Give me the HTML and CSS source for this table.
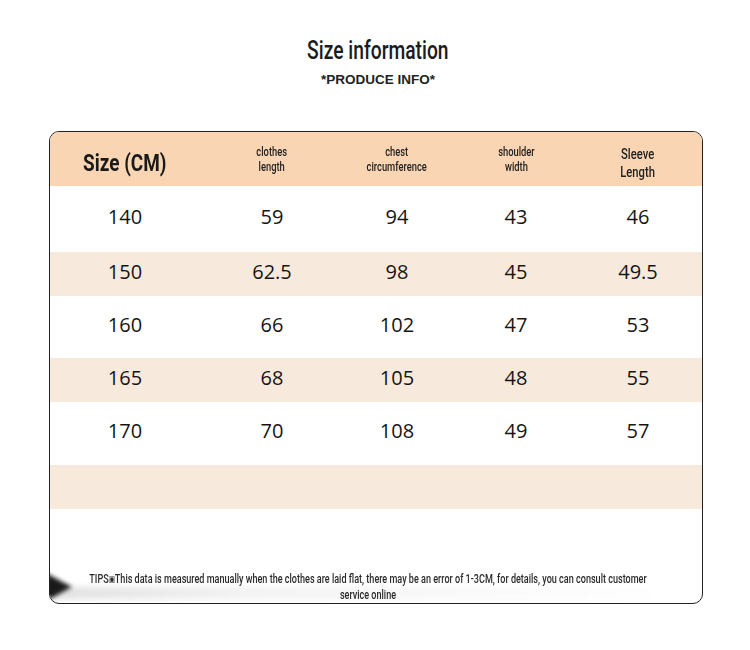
FILE: index.html
```html
<!DOCTYPE html>
<html>
<head>
<meta charset="utf-8">
<link rel="stylesheet" href="styles.css">
</head>
<body>
<div class="page">
  <h1 class="title"><span class="cond">Size information</span></h1>
  <div class="subtitle">*PRODUCE INFO*</div>
  <div class="card">
    <div class="row head">
      <div class="cell size-head"><span class="cond">Size (CM)</span></div>
      <div class="cell small"><span class="cond">clothes<br>length</span></div>
      <div class="cell small"><span class="cond">chest<br>circumference</span></div>
      <div class="cell small"><span class="cond">shoulder<br>width</span></div>
      <div class="cell mid"><span class="cond">Sleeve<br>Length</span></div>
    </div>
    <div class="row r1"><div class="cell">140</div><div class="cell">59</div><div class="cell">94</div><div class="cell">43</div><div class="cell">46</div></div>
    <div class="row alt"><div class="cell">150</div><div class="cell">62.5</div><div class="cell">98</div><div class="cell">45</div><div class="cell">49.5</div></div>
    <div class="row r3"><div class="cell">160</div><div class="cell">66</div><div class="cell">102</div><div class="cell">47</div><div class="cell">53</div></div>
    <div class="row alt"><div class="cell">165</div><div class="cell">68</div><div class="cell">105</div><div class="cell">48</div><div class="cell">55</div></div>
    <div class="row r5"><div class="cell">170</div><div class="cell">70</div><div class="cell">108</div><div class="cell">49</div><div class="cell">57</div></div>
    <div class="row alt empty"></div>
    <div class="tips">
      <p class="tips-text">TIPS<span class="tofu">▣</span>This data is measured manually when the clothes are laid flat, there may be an error of 1-3CM, for details, you can consult customer<br>service online</p>
      <div class="shade"></div>
      <div class="arrow"></div>
    </div>
  </div>
</div>
</body>
</html>
```

FILE: styles.css
```css
html, body {
  margin: 0;
  padding: 0;
  background: #ffffff;
}

.page {
  padding-top: 36px;
  font-family: Roboto, "Liberation Sans", sans-serif;
  color: #1a1a1a;
}

.cond {
  display: inline-block;
  transform: scaleX(0.8);
}

.title {
  margin: 0;
  font-size: 25px;
  line-height: 30px;
  font-weight: 500;
  text-align: center;
  color: #1c1c1c;
}

.title .cond {
  transform: translateX(3px) scaleX(0.77);
}

.subtitle {
  margin-top: 6px;
  padding-left: 6px;
  font-family: "Liberation Sans", Arial, sans-serif;
  font-size: 13.5px;
  line-height: 16px;
  font-weight: 700;
  text-align: center;
  color: #222;
}

.card {
  margin: 43px 47px 0 49px;
  height: 471px;
  border: 1px solid #222;
  border-radius: 10px;
  overflow: hidden;
  display: flex;
  flex-direction: column;
}

.row {
  flex-shrink: 0;
  display: grid;
  grid-template-columns: 150px 144px 106px 132px 112px;
  align-items: center;
  font-family: "Open Sans", "Noto Sans", sans-serif;
  font-size: 20px;
  color: #151515;
}

.row .cell {
  text-align: center;
  padding-bottom: 6px;
}

.head {
  height: 54px;
  background: #f9d5b3;
  font-family: Roboto, sans-serif;
}

.head .cell {
  padding-bottom: 0;
}

.size-head {
  font-size: 24px;
  font-weight: 700;
  padding-top: 7px;
  color: #1a1a1a;
}

.size-head .cond {
  transform: scaleX(0.79);
}

.small {
  font-size: 12px;
  line-height: 15px;
  font-weight: 500;
  color: #222;
  padding-top: 2px;
}

.small .cond {
  transform: scaleX(0.78);
}

.mid {
  font-size: 14px;
  line-height: 18px;
  font-weight: 500;
  color: #222;
  padding-top: 8px;
}

.r1 { height: 66px; }
.r3 { height: 62px; }
.r5 { height: 63px; }

.alt {
  height: 44px;
  background: #f7eadc;
}

.tips {
  position: relative;
  flex: 1;
  padding-top: 62px;
}

.tips-text {
  margin: 0 0 0 calc(50% - 408px);
  width: 800px;
  white-space: nowrap;
  font-family: Roboto, sans-serif;
  font-weight: 500;
  font-size: 12.5px;
  line-height: 16px;
  text-align: center;
  color: #2a2a2a;
  transform: scaleX(0.725);
  position: relative;
  z-index: 1;
}

.tofu {
  font-size: 9px;
  font-family: "DejaVu Sans", sans-serif;
  vertical-align: 1px;
}

.shade {
  position: absolute;
  left: 0;
  right: 0;
  top: 78px;
  height: 12px;
  background: linear-gradient(90deg, rgba(0,0,0,0.12), rgba(0,0,0,0.05) 30%, rgba(0,0,0,0.02) 70%, rgba(0,0,0,0) 95%);
  filter: blur(3px);
}

.arrow {
  position: absolute;
  left: -4px;
  top: 64px;
  width: 0;
  height: 0;
  border-top: 14px solid transparent;
  border-bottom: 14px solid transparent;
  border-left: 26px solid #1a1a1a;
  filter: blur(2px);
}
```
